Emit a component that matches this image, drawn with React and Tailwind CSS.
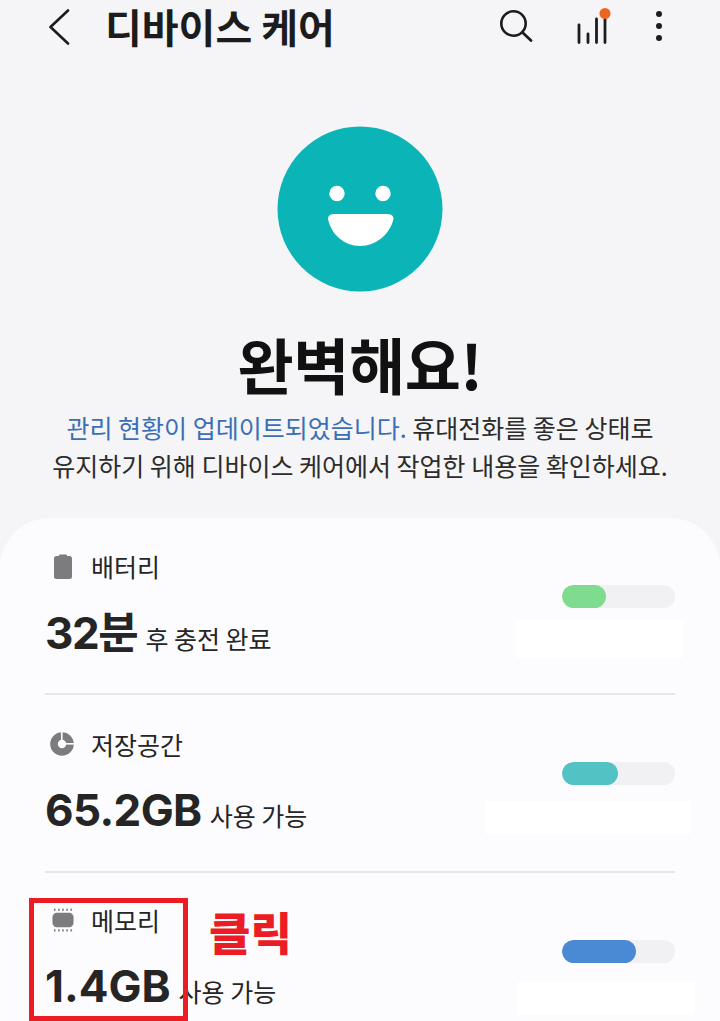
import React from "react";

function BatteryIcon() {
  return (
    <svg width="18" height="25" viewBox="0 0 18 25">
      <path d="M6 0.5h6a1 1 0 0 1 1 1V2h2.5A2.5 2.5 0 0 1 18 4.5v18a2.5 2.5 0 0 1-2.5 2.5h-13A2.5 2.5 0 0 1 0 22.5v-18A2.5 2.5 0 0 1 2.5 2H5v-.5a1 1 0 0 1 1-1z" fill="#7c7c7e" />
    </svg>
  );
}
function StorageIcon() {
  return (
    <svg width="24" height="24" viewBox="0 0 24 24">
      <circle cx="12" cy="12" r="8" fill="none" stroke="#7c7c7e" strokeWidth="7.6" />
      <rect x="12" y="11" width="12" height="1.6" fill="#fcfcfe" />
      <rect x="11" y="0" width="1.6" height="11" fill="#fcfcfe" />
    </svg>
  );
}
function MemoryIcon() {
  const xs = [3, 7.5, 12, 16.5, 21];
  return (
    <svg width="22" height="24" viewBox="0 0 24 26">
      <rect x="0.5" y="5" width="23" height="16" rx="5" fill="#7c7c7e" />
      {xs.map((x) => (
        <g key={x}>
          <rect x={x - 0.9} y="0.5" width="1.8" height="2.6" fill="#8a8a8c" />
          <rect x={x - 0.9} y="23" width="1.8" height="2.6" fill="#8a8a8c" />
        </g>
      ))}
    </svg>
  );
}

function Bar({ fill, color }) {
  return (
    <div className="h-[23px] w-[113px] overflow-hidden rounded-full bg-[#f1f1f3]">
      <div className={`h-full rounded-full ${color} ${fill}`} />
    </div>
  );
}

function Row({ icon, label, value, unit, bar, patch, rowClass, labelClass, valueClass, barClass, iconClass, trackClass }) {
  return (
    <div className={`relative mx-[45px] ${rowClass}`}>
      <div className={`flex items-center ${labelClass}`}>
        <div className={`flex w-[46px] justify-start ${iconClass}`}>{icon}</div>
        <span className="text-[25px] leading-[34px] text-[#252525]">{label}</span>
      </div>
      <div className={`flex items-baseline ${valueClass}`}>
        <span
          className={`text-[44px] leading-[56px] font-bold text-[#252525] ${trackClass}`}
          style={{ fontFamily: 'Inter, "Noto Sans CJK KR", sans-serif' }}
        >
          {value}
        </span>
        <span className="ml-[8px] text-[25px] leading-[34px] text-[#252525]">{unit}</span>
      </div>
      <div className={`absolute right-0 ${barClass}`}>{bar}</div>
      {patch}
    </div>
  );
}

export default function App() {
  return (
    <div
      className="relative h-[1021px] w-[720px] overflow-hidden bg-[#f5f5f7]"
      style={{ fontFamily: '"Noto Sans CJK KR", "Noto Sans", sans-serif' }}
    >
      {/* App bar */}
      <div className="flex h-[52px] items-center">
        <svg className="ml-[48px] mt-[2px] shrink-0" width="22" height="36" viewBox="0 0 22 36" fill="none">
          <path d="M20 1.5 L2.5 18 L20 34.5" stroke="#1c1c1c" strokeWidth="2.6" strokeLinecap="round" strokeLinejoin="round" />
        </svg>
        <h1 className="ml-[35px] shrink-0 whitespace-nowrap text-[40px] leading-[56px] font-bold text-[#1c1c1c]">디바이스 케어</h1>
        <div className="ml-auto flex items-center">
          <svg width="36" height="36" viewBox="0 0 36 36" fill="none" className="mr-[43px] mt-[1px]">
            <circle cx="15.5" cy="14.5" r="12.2" stroke="#1c1c1c" strokeWidth="2.6" />
            <path d="M24.5 23.5 L33 31.5" stroke="#1c1c1c" strokeWidth="2.8" strokeLinecap="round" />
          </svg>
          <svg width="36" height="42" viewBox="0 0 36 42" fill="none" className="mr-[42px] mt-[1px]">
            <path d="M2 19 V36.5 M11 28 V36.5 M19.5 13 V36.5 M28 12 V36.5" stroke="#1c1c1c" strokeWidth="2.8" strokeLinecap="round" />
            <circle cx="28" cy="7.5" r="5.5" fill="#ee651f" />
          </svg>
          <svg width="8" height="34" viewBox="0 0 8 34" className="mr-[57px] mt-[1px]">
            <circle cx="4" cy="4" r="3" fill="#1c1c1c" />
            <circle cx="4" cy="16" r="3" fill="#1c1c1c" />
            <circle cx="4" cy="28" r="3" fill="#1c1c1c" />
          </svg>
        </div>
      </div>

      {/* Smiley */}
      <div className="mt-[74px] flex justify-center">
        <svg width="166" height="166" viewBox="0 0 166 166">
          <circle cx="83" cy="83" r="82.5" fill="#0bb5b7" />
          <circle cx="60" cy="67.5" r="7.7" fill="#fff" />
          <circle cx="106" cy="67.5" r="7.7" fill="#fff" />
          <path d="M57 88 H110 Q116.5 88 116.5 93 C113 108 99 120 83 120 C67 120 54 108 51 93 Q51 88 57 88 Z" fill="#fff" />
        </svg>
      </div>

      <h2 className="mt-[32px] text-center text-[61px] leading-[80px] font-bold tracking-[-0.4px] text-[#111]">완벽해요!</h2>

      <div className="mt-[4px] text-center text-[25px] leading-[38px] text-[#2c2c2c]">
        <p><span className="text-[#3a6fb5]">관리 현황이 업데이트되었습니다.</span> 휴대전화를 좋은 상태로</p>
        <p>유지하기 위해 디바이스 케어에서 작업한 내용을 확인하세요.</p>
      </div>

      {/* Card */}
      <div className="mt-[34px] h-[520px] rounded-t-[50px] bg-[#fcfcfe]">
        <Row
          icon={<BatteryIcon />}
          iconClass="pl-[9px]"
          label="배터리"
          value="32분"
          unit="후 충전 완료"
          trackClass="tracking-[-1.4px]"
          rowClass="h-[177px] border-b-2 border-[#e6e6e8]"
          labelClass="pt-[31px]"
          valueClass="mt-[22px]"
          barClass="top-[67px]"
          bar={<Bar fill="w-[44px]" color="bg-[#7fdb8d]" />}
          patch={<div className="absolute left-[471px] top-[102px] h-[38px] w-[167px] bg-white" />}
        />
        <Row
          icon={<StorageIcon />}
          iconClass="pl-[5px]"
          label="저장공간"
          value="65.2GB"
          unit="사용 가능"
          trackClass="tracking-[-0.6px]"
          rowClass="h-[178px] border-b-2 border-[#e6e6e8]"
          labelClass="pt-[32px]"
          valueClass="mt-[21px]"
          barClass="top-[67px]"
          bar={<Bar fill="w-[56px]" color="bg-[#52c2c4]" />}
          patch={<div className="absolute left-[440px] top-[106px] h-[33px] w-[206px] bg-white" />}
        />
        <Row
          icon={<MemoryIcon />}
          iconClass="pl-[7px]"
          label="메모리"
          value="1.4GB"
          unit="사용 가능"
          trackClass="tracking-[0px]"
          rowClass="h-[148px]"
          labelClass="pt-[30px]"
          valueClass="mt-[21px]"
          barClass="top-[67px]"
          bar={<Bar fill="w-[74px]" color="bg-[#4a8ad4]" />}
          patch={<div className="absolute left-[472px] top-[109px] h-[33px] w-[178px] bg-white" />}
        />
      </div>

      {/* Annotation overlay */}
      <div className="absolute left-[29px] top-[898px] h-[123px] w-[159px] border-[5px] border-[#ec1c24]" />
      <div className="absolute left-[209px] top-[902px] text-[45px] leading-[60px] font-black text-[#ec1c24]">클릭</div>
    </div>
  );
}
